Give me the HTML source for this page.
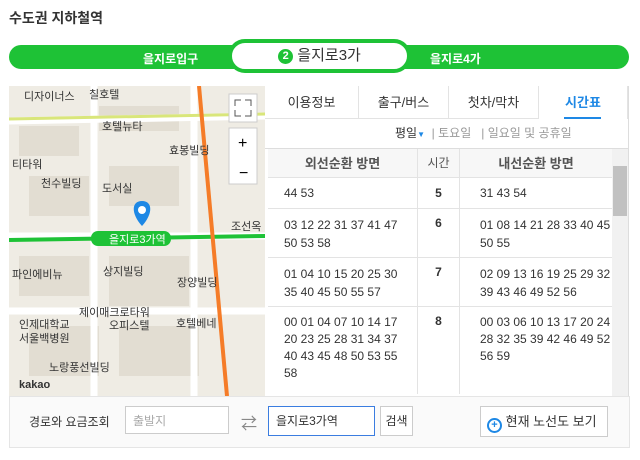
<html><head><style>
body{margin:0;width:640px;height:460px;background:#fff;font-family:"Liberation Sans","Noto Sans CJK KR",sans-serif;position:relative;overflow:hidden;color:#333}
.a{position:absolute}
.bar{left:9px;top:45px;width:620px;height:24px;background:#1ec236;border-radius:12px}
.pill{left:228px;top:39px;width:183px;height:34px;border:4px solid #1ec236;border-radius:20px;background:#fff;box-sizing:border-box;text-align:center;line-height:26px;font-size:15px}
.gt{color:#fff;font-weight:bold;font-size:12px;top:50px}
.tab{top:86px;height:33px;line-height:33px;text-align:center;font-size:13px;border-right:1px solid #e3e3e3;border-bottom:1px solid #e3e3e3;box-sizing:border-box}
td{border-bottom:1px solid #e3e3e3;border-right:1px solid #e3e3e3;font-size:12px;vertical-align:top;padding:0;white-space:nowrap}
</style></head><body>
<div class="a" style="left:9px;top:8px;font-size:14px;font-weight:bold;color:#333">수도권 지하철역</div>
<div class="a bar"></div>
<div class="a gt" style="left:143px">을지로입구</div>
<div class="a gt" style="left:430px">을지로4가</div>
<div class="a pill"><span style="display:inline-block;width:15px;height:15px;border-radius:50%;background:#1ec236;color:#fff;font-size:11px;line-height:15px;font-weight:bold;vertical-align:1px">2</span> 을지로3가</div>

<svg class="a" style="left:9px;top:86px" width="256" height="310" viewBox="0 0 256 310">
<rect width="256" height="310" fill="#efece4"/>
<g fill="#e2ddd2"><rect x="10" y="40" width="60" height="30"/><rect x="90" y="20" width="80" height="25"/><rect x="20" y="90" width="60" height="40"/><rect x="100" y="80" width="70" height="40"/><rect x="10" y="170" width="70" height="40"/><rect x="100" y="170" width="80" height="50"/><rect x="20" y="240" width="70" height="50"/><rect x="110" y="240" width="80" height="50"/></g>
<g stroke="#fff" stroke-width="7"><line x1="0" y1="35" x2="256" y2="30"/><line x1="85" y1="0" x2="85" y2="310"/><line x1="0" y1="150" x2="256" y2="150"/><line x1="185" y1="0" x2="185" y2="310"/><line x1="0" y1="225" x2="256" y2="225"/></g>
<line x1="0" y1="33" x2="256" y2="28" stroke="#d9e67a" stroke-width="3"/>
<line x1="0" y1="154" x2="256" y2="150" stroke="#1ec236" stroke-width="4"/>
<line x1="190" y1="0" x2="218" y2="310" stroke="#f57c28" stroke-width="4"/>
<rect x="82" y="145" width="80" height="15" rx="7" fill="#1ec236"/>
<text x="100" y="157" font-size="11" fill="#fff">을지로3가역</text>
<path d="M133 140 C122 128 122 115 133 115 C144 115 144 128 133 140Z" fill="#1e88e5"/>
<circle cx="133" cy="124" r="4" fill="#fff"/>
<g font-size="11" fill="#333"><text x="15" y="14">디자이너스</text><text x="80" y="12">칠호텔</text><text x="93" y="44">호텔뉴타</text><text x="160" y="68">효봉빌딩</text><text x="3" y="82">티타워</text><text x="32" y="101">천수빌딩</text><text x="93" y="106">도서실</text><text x="3" y="192">파인에비뉴</text><text x="94" y="189">상지빌딩</text><text x="168" y="200">장양빌딩</text><text x="70" y="230">제이매크로타워</text><text x="100" y="243">오피스텔</text><text x="167" y="241">호텔베네</text><text x="10" y="242">인제대학교</text><text x="10" y="256">서울백병원</text><text x="40" y="285">노랑풍선빌딩</text><text x="10" y="302" font-weight="bold">kakao</text><text x="222" y="144">조선옥</text></g>
<rect x="220" y="8" width="28" height="28" fill="#fff" stroke="#ccc"/>
<path d="M226 20v-6h6M242 20v-6h-6M226 24v6h6M242 24v6h-6" stroke="#555" fill="none"/>
<rect x="220" y="42" width="28" height="56" fill="#fff" stroke="#ccc"/>
<text x="229" y="62" font-size="16">+</text><text x="230" y="92" font-size="16">−</text>
</svg>

<div class="a tab" style="left:265px;width:94px">이용정보</div>
<div class="a tab" style="left:359px;width:90px">출구/버스</div>
<div class="a tab" style="left:449px;width:90px">첫차/막차</div>
<div class="a tab" style="left:539px;width:89px;border-bottom:none;color:#1e88e5;font-weight:bold">시간표<div style="position:absolute;left:25px;right:26px;bottom:0;height:2px;background:#1e88e5"></div></div>
<div class="a" style="left:395px;top:124px;font-size:12px;color:#999"><span style="color:#333">평일</span><span style="color:#1e88e5;font-size:8px">▼</span> &nbsp;| 토요일 &nbsp;&nbsp;| 일요일 및 공휴일</div>
<div class="a" style="left:265px;top:148px;width:363px;height:1px;background:#ddd"></div>
<table class="a" style="left:268px;top:149px;border-collapse:collapse;width:344px;table-layout:fixed" cellspacing="0">
<tr style="height:28px;background:#f7f7f7;font-weight:bold"><td style="width:149px;text-align:center;vertical-align:middle;font-size:13px;color:#555">외선순환 방면</td><td style="width:41px;text-align:center;vertical-align:middle;font-weight:normal;color:#555">시간</td><td style="text-align:center;vertical-align:middle;font-size:13px;color:#555;border-right:none">내선순환 방면</td></tr>
<tr style="height:31px"><td style="padding:8px 0 0 16px">44 53</td><td style="text-align:center;padding-top:8px;font-weight:bold">5</td><td style="padding:8px 0 0 20px;border-right:none">31 43 54</td></tr>
<tr style="height:49px"><td style="padding:7px 0 0 16px;line-height:18px">03 12 22 31 37 41 47<br>50 53 58</td><td style="text-align:center;padding-top:7px;font-weight:bold">6</td><td style="padding:7px 0 0 20px;line-height:18px;border-right:none">01 08 14 21 28 33 40 45<br>50 55</td></tr>
<tr style="height:49px"><td style="padding:7px 0 0 16px;line-height:18px">01 04 10 15 20 25 30<br>35 40 45 50 55 57</td><td style="text-align:center;padding-top:7px;font-weight:bold">7</td><td style="padding:7px 0 0 20px;line-height:18px;border-right:none">02 09 13 16 19 25 29 32<br>39 43 46 49 52 56</td></tr>
<tr style="height:88px"><td style="padding:7px 0 0 16px;line-height:17px;border-bottom:none">00 01 04 07 10 14 17<br>20 23 25 28 31 34 37<br>40 43 45 48 50 53 55<br>58</td><td style="text-align:center;padding-top:7px;font-weight:bold;border-bottom:none">8</td><td style="padding:7px 0 0 20px;line-height:17px;border:none">00 03 06 10 13 17 20 24<br>28 32 35 39 42 46 49 52<br>56 59</td></tr>
</table>
<div class="a" style="left:612px;top:149px;width:16px;height:247px;background:#f1f1f1"></div>
<div class="a" style="left:613px;top:166px;width:14px;height:50px;background:#c1c1c1"></div>
<div class="a" style="left:628px;top:86px;width:1px;height:310px;background:#ddd"></div>

<div class="a" style="left:9px;top:396px;width:619px;height:50px;background:#fafafa;border:1px solid #e5e5e5"></div>
<div class="a" style="left:29px;top:413px;font-size:12px">경로와 요금조회</div>
<div class="a" style="left:125px;top:406px;width:104px;height:28px;border:1px solid #ccc;background:#fff;font-size:12px;color:#aaa;line-height:28px;padding-left:7px;box-sizing:border-box">출발지</div>
<div class="a" style="left:241px;top:410px;font-size:16px;color:#888">⇄</div>
<div class="a" style="left:268px;top:406px;width:107px;height:30px;border:1px solid #3b7de0;background:#fff;font-size:12px;line-height:28px;padding-left:7px;box-sizing:border-box">을지로3가역</div>
<div class="a" style="left:380px;top:406px;width:33px;height:30px;border:1px solid #ccc;background:#fff;font-size:12px;line-height:28px;text-align:center;box-sizing:border-box">검색</div>
<div class="a" style="left:480px;top:406px;width:128px;height:31px;border:1px solid #ccc;background:#fff;font-size:13px;line-height:29px;box-sizing:border-box;padding-left:6px;white-space:nowrap"><span style="display:inline-block;width:11px;height:11px;border:2px solid #1e88e5;border-radius:50%;color:#1e88e5;font-size:11px;line-height:11px;text-align:center;font-weight:bold;vertical-align:-2px">+</span> 현재 노선도 보기</div>
</body></html>
